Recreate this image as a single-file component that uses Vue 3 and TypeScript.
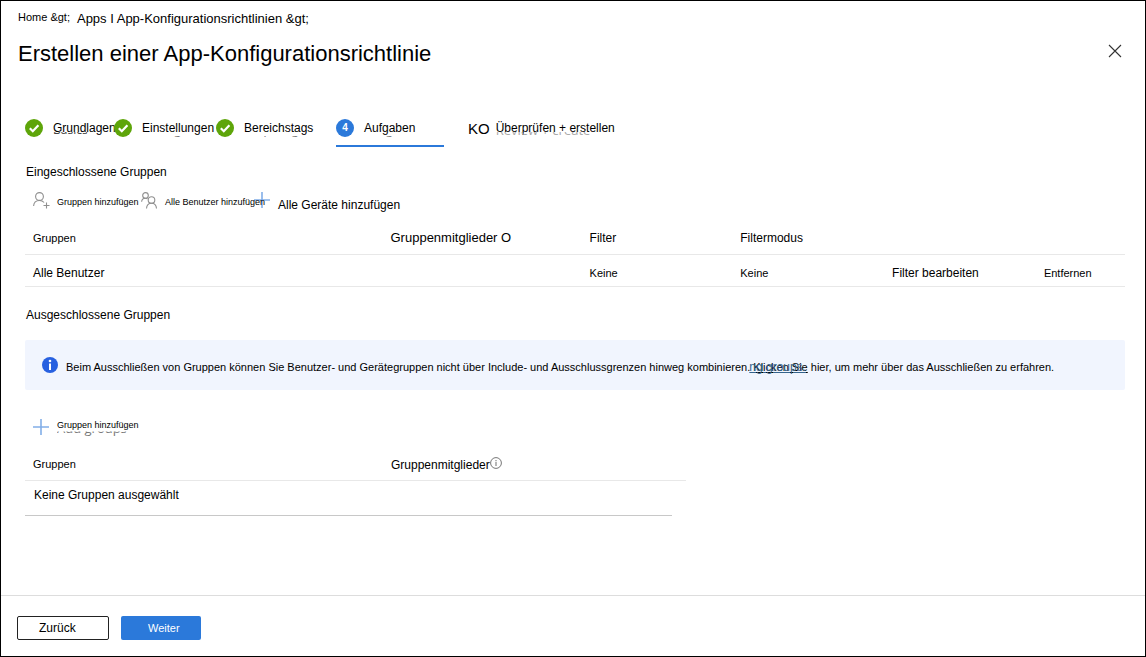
<script setup lang="ts">
interface Step {
  id: string
  label: string
  trace: string
  done: boolean
  active: boolean
  marker: string
}

const steps: Step[] = [
  { id: 'basics', label: 'Grundlagen', trace: 'Basics', done: true, active: false, marker: '' },
  { id: 'settings', label: 'Einstellungen', trace: 'Settings', done: true, active: false, marker: '' },
  { id: 'scope', label: 'Bereichstags', trace: 'Scope tags', done: true, active: false, marker: '' },
  { id: 'assign', label: 'Aufgaben', trace: 'Assignments', done: false, active: true, marker: '4' },
  { id: 'review', label: 'Überprüfen + erstellen', trace: 'Review + create', done: false, active: false, marker: 'KO' },
]

const crumbs = { home: 'Home >', apps: 'Apps I App-Konfigurationsrichtlinien >' }
const escapeGt = (text: string): string => text.replace('>', '&' + 'gt;')
</script>

<template>
  <div class="page">
    <header class="head">
      <nav class="crumbs" aria-label="Breadcrumb">
        <a href="#" class="crumb-home">{{ escapeGt(crumbs.home) }}</a>
        <a href="#" class="crumb-apps">{{ escapeGt(crumbs.apps) }}</a>
      </nav>
      <div class="title-row">
        <h1>Erstellen einer App-Konfigurationsrichtlinie</h1>
        <button type="button" class="close" aria-label="Schließen">
          <svg width="14" height="14" viewBox="0 0 14 14"><path d="M1 1l12 12M13 1L1 13" stroke="#333" stroke-width="1.1" fill="none" /></svg>
        </button>
      </div>
    </header>

    <main class="content">
      <nav class="steps" aria-label="Schritte">
        <button v-for="step in steps" :key="step.id" type="button" class="step" :class="[step.id, { active: step.active }]">
          <svg v-if="step.done" width="18" height="18" viewBox="0 0 18 18">
            <circle cx="9" cy="9" r="9" fill="#5ea50a" />
            <path d="M4.800 9.200l3 3L13.400 6.200" fill="none" stroke="#fff" stroke-width="2.200" />
          </svg>
          <span v-else-if="step.active" class="number">{{ step.marker }}</span>
          <span v-else class="pending">{{ step.marker }}</span>
          <span class="label">{{ step.label }}<span class="trace" aria-hidden="true">{{ step.trace }}</span></span>
        </button>
      </nav>

      <h2>Eingeschlossene Gruppen</h2>
      <div class="toolbar">
        <button type="button" class="tool first">
          <svg width="17" height="17" viewBox="0 0 17 17" fill="none" stroke="#8f8f8f" stroke-width="1.1">
            <circle cx="6.5" cy="4.5" r="3.9" />
            <path d="M.6 14C.8 10.600 3.200 8.500 6.500 8.500c2 0 3.600.8 4.600 2M13.500 10.500v6M10.500 13.500h6" />
          </svg>
          <span class="label small">Gruppen hinzufügen<span class="trace" aria-hidden="true">Add groups</span></span>
        </button>
        <button type="button" class="tool second">
          <svg width="17" height="17" viewBox="0 0 17 17" fill="none" stroke="#8f8f8f" stroke-width="1.1">
            <circle cx="4.500" cy="3.400" r="2.800" />
            <path d="M.6 9.800C.8 7.600 2.200 6.300 4.300 6.300c.9 0 1.600.2 2.200.6" />
            <circle cx="10.500" cy="8" r="3.300" />
            <path d="M5.500 16.500c.2-3.200 2-5.200 5-5.200s4.800 2 5 5.200" />
          </svg>
          <span class="label small">Alle Benutzer hinzufügen</span>
        </button>
        <button type="button" class="tool third">
          <svg width="16" height="16" viewBox="0 0 16 16"><path d="M8 0v16M0 8h16" stroke="#82aee8" stroke-width="1.600" /></svg>
          <span>Alle Geräte hinzufügen</span>
        </button>
      </div>

      <table class="included">
        <thead>
          <tr>
            <th class="c1 compact">Gruppen</th>
            <th class="c2 large">Gruppenmitglieder O</th>
            <th class="c3">Filter</th>
            <th class="c4">Filtermodus</th>
            <th class="c4"></th>
            <th></th>
          </tr>
        </thead>
        <tbody>
          <tr>
            <td>Alle Benutzer</td>
            <td></td>
            <td class="compact">Keine</td>
            <td class="compact">Keine</td>
            <td><a href="#">Filter bearbeiten</a></td>
            <td class="compact"><a href="#">Entfernen</a></td>
          </tr>
        </tbody>
      </table>

      <h2 class="excluded-title">Ausgeschlossene Gruppen</h2>
      <div class="notice">
        <svg width="16" height="16" viewBox="0 0 16 16">
          <circle cx="8" cy="8" r="8" fill="#2760e0" />
          <circle cx="8" cy="4" r="1.300" fill="#fff" />
          <path d="M8 6.500v6.500" stroke="#fff" stroke-width="2" />
        </svg>
        <p>Beim Ausschließen von Gruppen können Sie Benutzer- und Gerätegruppen nicht über Include- und Ausschlussgrenzen hinweg kombinieren. <a href="#" class="more">Klicken Sie<span class="link-trace" aria-hidden="true">ng groups.</span></a> hier, um mehr über das Ausschließen zu erfahren.</p>
      </div>

      <button type="button" class="tool add">
        <svg width="16" height="16" viewBox="0 0 16 16"><path d="M8 0v16M0 8h16" stroke="#82aee8" stroke-width="1.600" /></svg>
        <span class="label small">Gruppen hinzufügen<span class="trace" aria-hidden="true">Add groups</span></span>
      </button>

      <table class="excluded">
        <thead>
          <tr>
            <th class="e1 compact">Gruppen</th>
            <th>
              <span class="members">Gruppenmitglieder
                <svg width="12" height="12" viewBox="0 0 12 12"><circle cx="6" cy="6" r="5.400" fill="none" stroke="#777" /><path d="M6 3v1.200M6 5v4" stroke="#888" stroke-width="1.200" /></svg>
              </span>
            </th>
          </tr>
        </thead>
      </table>
      <p class="empty">Keine Gruppen ausgewählt</p>
    </main>

    <footer class="foot">
      <button type="button" class="btn back">Zurück</button>
      <button type="button" class="btn next">Weiter</button>
    </footer>
  </div>
</template>

<style>
body {
  margin: 0;
}
</style>

<style scoped>
* {
  box-sizing: border-box;
}
.page {
  display: flex;
  flex-direction: column;
  min-height: 100vh;
  border: 1px solid #000;
  background: #fff;
  color: #000;
  font-family: "Liberation Sans", Arial, sans-serif;
  font-size: 12px;
  line-height: 16px;
}
button {
  padding: 0;
  border: 0;
  background: none;
  color: inherit;
  font: inherit;
  text-align: left;
  white-space: nowrap;
}
a {
  color: inherit;
  text-decoration: none;
}
svg {
  display: block;
  flex: none;
}
h1, h2, p {
  margin: 0;
  font-weight: 400;
}
.head {
  padding: 8px 23px 0 17px;
}
.crumbs {
  display: flex;
  gap: 7px;
}
.crumb-home {
  font-size: 11px;
}
.crumb-apps {
  font-size: 13px;
  line-height: 20px;
}
.title-row {
  display: flex;
  justify-content: space-between;
  align-items: flex-start;
  margin-top: 11px;
}
h1 {
  font-size: 22px;
  line-height: 28px;
}
.close {
  padding-top: 4px;
}
.content {
  flex: 1;
  padding: 49px 20px 24px 24px;
}
.steps {
  display: flex;
}
.step {
  display: flex;
  align-items: flex-start;
  gap: 10px;
  height: 30px;
  padding-top: 2px;
  border-bottom: 2px solid transparent;
}
.step svg {
  position: relative;
  z-index: 1;
}
.basics {
  width: 89px;
}
.settings {
  width: 102px;
}
.scope {
  width: 120px;
}
.assign {
  width: 108px;
  margin-right: 24px;
}
.review {
  gap: 6px;
}
.step.active {
  border-color: #2b79da;
}
.number {
  width: 18px;
  height: 18px;
  border-radius: 50%;
  background: #2b79da;
  color: #fff;
  font-size: 10px;
  font-weight: 700;
  line-height: 18px;
  text-align: center;
}
.pending {
  font-size: 15px;
  line-height: 20px;
}
.label {
  position: relative;
  line-height: 18px;
}
.trace {
  position: absolute;
  top: 2px;
  left: 0;
  color: #777;
  font-family: "Open Sans", sans-serif;
  font-size: 12px;
  line-height: 18px;
  clip-path: inset(15px 0 0 0);
}
.basics .trace, .review .trace {
  clip-path: inset(11px 0 0 0);
}
.basics .trace {
  color: #444;
}
.review .trace {
  color: #aaa;
  font-size: 13px;
}
h2 {
  margin-top: 17px;
  padding-left: 1px;
  font-size: 12px;
}
.toolbar {
  display: flex;
  align-items: flex-start;
  height: 20px;
  margin-top: 12px;
  padding-left: 8px;
}
.tool {
  display: flex;
  align-items: flex-start;
  gap: 8px;
}
.tool .label {
  line-height: 20px;
}
.small {
  font-size: 9px;
}
.first {
  width: 108px;
  gap: 7px;
}
.first .trace {
  clip-path: inset(16px 0 0 0);
}
.second {
  width: 113px;
  gap: 7px;
}
.third {
  line-height: 26px;
}
.included {
  width: 100%;
  margin-top: 9px;
  border-collapse: collapse;
  table-layout: fixed;
}
th, td {
  height: 33px;
  padding: 0 0 0 8px;
  border-bottom: 1px solid #e8e8e8;
  font-weight: 400;
  text-align: left;
  white-space: nowrap;
}
.included th {
  padding-top: 2px;
}
.included td {
  height: 32px;
  padding-top: 5px;
}
.compact {
  font-size: 11px;
}
.large {
  font-size: 13px;
}
.c1 {
  width: 32.5%;
}
.c2 {
  width: 18.1%;
}
.c3 {
  width: 13.7%;
}
.c4 {
  width: 13.8%;
}
.excluded-title {
  margin-top: 20px;
}
.notice {
  display: flex;
  align-items: center;
  gap: 8px;
  min-height: 50px;
  margin-top: 17px;
  padding: 0 17px;
  border-radius: 2px;
  background: #f1f5fe;
}
.notice p {
  padding-top: 4px;
  font-size: 11px;
}
.more {
  position: relative;
  text-decoration: underline;
}
.link-trace {
  position: absolute;
  top: 0;
  left: -4px;
  color: #35648c;
  font-size: 12px;
  line-height: 12px;
  text-decoration: underline;
  white-space: nowrap;
}
.add {
  margin-top: 29px;
  padding-left: 8px;
}
.add .label {
  line-height: 12px;
}
.add .trace {
  top: 0;
  font-size: 13px;
  clip-path: inset(13px 0 0 0);
}
.excluded {
  width: 661px;
  max-width: 100%;
  margin-top: 13px;
  border-collapse: collapse;
}
.e1 {
  width: 358px;
}
.members {
  display: flex;
  align-items: flex-start;
  padding-top: 3px;
}
.empty {
  width: 647px;
  max-width: 100%;
  padding: 6px 0 12px 9px;
  border-bottom: 1px solid #c8c8c8;
}
.foot {
  display: flex;
  gap: 12px;
  padding: 20px 16px 16px;
  border-top: 1px solid #ddd;
}
.btn {
  height: 24px;
  border-radius: 2px;
}
.back {
  width: 92px;
  padding-left: 21px;
  border: 1px solid #222;
}
.next {
  width: 80px;
  padding-left: 27px;
  background: #2b79da;
  color: #fff;
  font-size: 11px;
}
</style>
